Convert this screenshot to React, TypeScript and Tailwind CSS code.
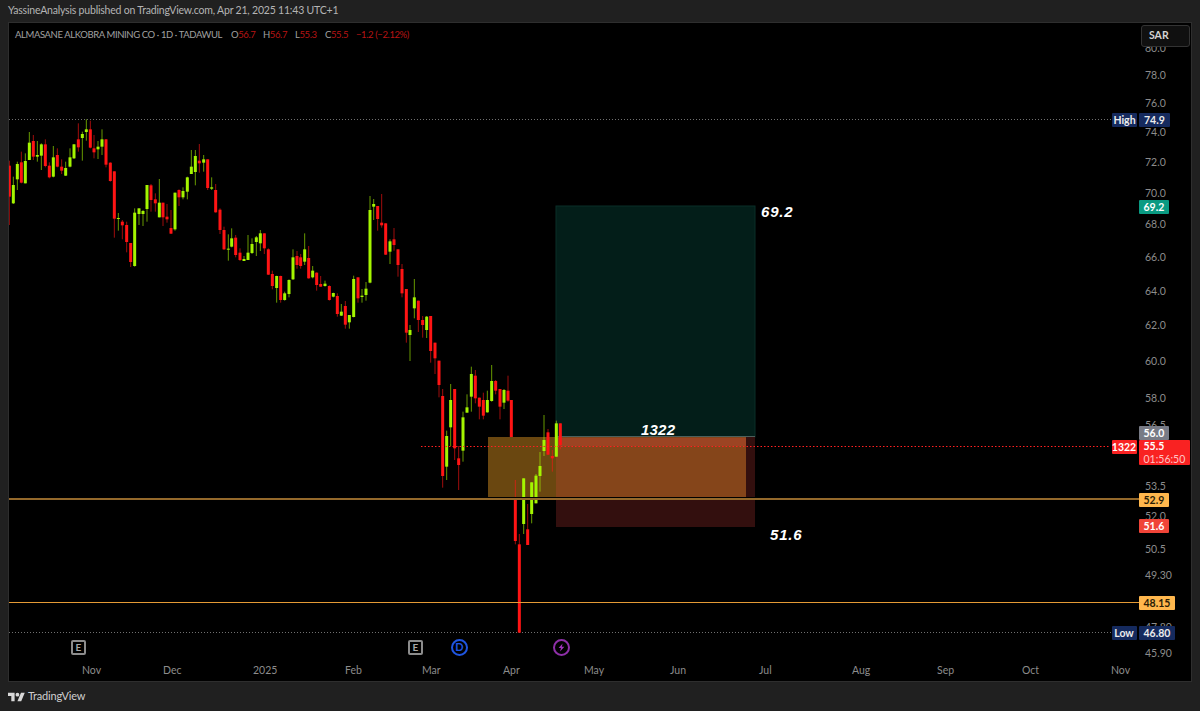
import React from "react";

type Candle = [number, number, number, number, number, "g" | "r"];

// read off the chart as x, wick top, wick bottom, body top, body bottom, colour
const groupA: Candle[] = [
  [28, 152, 345, 167, 260, "r"], [40, 200, 282, 225, 280, "g"], [52, 155, 240, 162, 208, "g"], [64, 125, 220, 157, 218, "r"],
  [76, 130, 220, 153, 220, "g"], [88, 66, 150, 98, 150, "g"], [100, 75, 150, 93, 140, "r"], [112, 93, 155, 135, 140, "g"],
  [124, 100, 180, 103, 137, "g"], [136, 88, 172, 103, 168, "r"], [148, 157, 205, 167, 202, "r"], [160, 108, 202, 142, 200, "g"],
  [172, 115, 172, 135, 170, "r"], [185, 148, 192, 170, 182, "r"], [197, 155, 198, 174, 197, "g"], [210, 115, 172, 142, 170, "g"],
  [222, 102, 147, 103, 145, "g"], [235, 40, 125, 88, 112, "r"], [247, 65, 152, 72, 84, "g"], [259, 28, 92, 58, 66, "g"],
  [271, 32, 115, 58, 113, "r"], [282, 75, 145, 115, 127, "r"], [294, 93, 147, 110, 118, "g"], [306, 58, 135, 88, 110, "g"],
  [318, 87, 172, 88, 164, "r"], [331, 157, 215, 158, 213, "r"], [343, 184, 383, 184, 326, "r"], [355, 309, 362, 324, 327, "g"],
  [367, 330, 388, 335, 346, "r"], [380, 335, 427, 345, 396, "r"], [392, 399, 471, 399, 456, "r"], [404, 295, 470, 308, 468, "g"],
  [417, 295, 345, 295, 312, "g"], [429, 300, 348, 303, 312, "g"], [441, 225, 335, 225, 297, "g"], [453, 222, 305, 226, 270, "r"],
  [466, 250, 305, 268, 280, "r"], [478, 207, 322, 278, 322, "g"], [489, 278, 348, 278, 322, "r"], [501, 282, 338, 320, 328, "r"],
  [513, 300, 372, 354, 371, "r"], [525, 248, 362, 248, 358, "g"], [537, 238, 288, 240, 262, "r"], [549, 232, 268, 243, 262, "g"],
  [562, 200, 268, 202, 245, "g"], [574, 120, 192, 170, 192, "g"], [586, 120, 226, 138, 186, "g"], [598, 102, 188, 152, 160, "r"],
  [611, 135, 185, 148, 158, "g"], [623, 148, 240, 148, 234, "r"], [635, 202, 240, 232, 236, "g"], [647, 222, 308, 240, 307, "r"],
  [660, 295, 372, 299, 360, "r"], [672, 350, 420, 360, 418, "r"], [685, 373, 452, 416, 419, "g"],
];

const groupB: Candle[] = [
  [5, 145, 202, 175, 200, "g"], [17, 165, 232, 173, 225, "r"], [30, 205, 243, 218, 240, "r"], [42, 228, 243, 237, 243, "g"],
  [54, 165, 240, 218, 240, "g"], [66, 175, 222, 192, 219, "g"], [79, 168, 228, 172, 186, "g"], [91, 150, 213, 160, 190, "g"],
  [103, 160, 222, 160, 205, "r"], [115, 205, 285, 208, 284, "r"], [127, 272, 328, 282, 318, "r"], [140, 287, 368, 288, 324, "g"],
  [152, 287, 368, 288, 360, "r"], [164, 335, 362, 340, 360, "g"], [177, 298, 352, 300, 342, "g"], [189, 208, 300, 232, 298, "g"],
  [201, 213, 266, 228, 255, "r"], [212, 222, 266, 232, 258, "r"], [224, 160, 255, 208, 245, "g"], [236, 198, 296, 234, 295, "r"],
  [248, 258, 295, 272, 292, "g"], [260, 277, 332, 278, 315, "r"], [272, 288, 320, 312, 320, "r"], [285, 302, 320, 311, 318, "g"],
  [298, 316, 362, 318, 360, "r"], [310, 338, 352, 339, 350, "g"], [322, 340, 410, 348, 402, "r"], [334, 372, 408, 395, 407, "g"],
  [346, 363, 446, 378, 434, "r"], [358, 405, 446, 405, 427, "g"], [371, 287, 412, 297, 411, "g"], [384, 292, 368, 292, 355, "r"],
  [396, 327, 368, 347, 351, "g"], [408, 306, 362, 326, 345, "g"], [420, 48, 310, 90, 308, "g"], [431, 57, 120, 72, 80, "g"],
  [443, 78, 152, 78, 117, "r"], [455, 42, 143, 128, 136, "r"], [467, 130, 225, 130, 224, "r"], [480, 178, 252, 184, 215, "g"],
  [492, 144, 212, 178, 195, "r"], [504, 208, 290, 208, 255, "r"], [516, 252, 352, 267, 340, "r"], [529, 327, 488, 327, 458, "r"],
];

const groupC: Candle[] = [
  [58, 27, 145, 82, 115, "g"], [70, 92, 186, 92, 150, "r"], [83, 138, 203, 150, 165, "r"],
  [95, 138, 204, 140, 180, "g"], [107, 138, 278, 138, 243, "r"], [120, 218, 312, 218, 265, "r"], [132, 272, 382, 272, 345, "r"],
];

const groupD: Candle[] = [
  [68, 87, 383, 108, 348, "r"], [80, 212, 360, 228, 320, "g"], [92, 72, 258, 120, 202, "g"], [104, 87, 300, 87, 265, "r"],
  [116, 258, 390, 295, 315, "r"], [129, 155, 305, 172, 272, "g"], [141, 103, 158, 142, 158, "g"], [154, 20, 155, 42, 110, "g"],
  [166, 30, 130, 47, 115, "r"], [178, 113, 178, 113, 140, "r"], [190, 98, 178, 120, 167, "r"], [202, 92, 158, 120, 157, "g"],
  [215, 15, 125, 63, 123, "g"], [227, 60, 103, 63, 92, "r"], [240, 87, 178, 87, 140, "r"], [252, 87, 147, 90, 128, "g"],
  [264, 47, 125, 92, 122, "r"], [274, 120, 231, 120, 231, "r"], [286, 360, 553, 417, 543, "r"], [298, 522, 818, 553, 818, "r"],
  [311, 355, 522, 355, 492, "g"], [323, 432, 555, 508, 555, "r"], [335, 367, 490, 367, 462, "g"], [348, 342, 430, 347, 430, "g"],
  [360, 276, 395, 318, 348, "g"], [372, 165, 288, 240, 273, "g"], [384, 207, 285, 217, 284, "r"], [397, 270, 335, 288, 295, "r"],
  [409, 182, 290, 190, 290, "g"], [421, 190, 268, 190, 255, "r"],
];

const place = (rows: Candle[], x0: number, y0: number): Candle[] =>
  rows.map(([x, wt, wb, bt, bb, c]) => [x0 + x / 3, y0 + wt / 3, y0 + wb / 3, y0 + bt / 3, y0 + bb / 3, c]);

const candles = [
  ...place(groupA, 0, 110),
  ...place(groupB, 230, 180),
  [410, 325, 361, 330, 335, "g"] as Candle,
  ...place(groupC, 395, 270),
  ...place(groupD, 420, 360),
];

const ticks = [
  ["80.0", 48], ["78.0", 75], ["76.0", 103], ["74.0", 132], ["72.0", 162], ["70.0", 193], ["68.0", 224], ["66.0", 257],
  ["64.0", 291], ["62.0", 325], ["60.0", 361], ["58.0", 398], ["56.5", 425], ["53.5", 486], ["52.0", 516], ["50.5", 549],
  ["49.30", 575], ["47.80", 627], ["45.90", 653],
] as const;

const months = ["Nov", "Dec", "2025", "Feb", "Mar", "Apr", "May", "Jun", "Jul", "Aug", "Sep", "Oct", "Nov"];

function PriceTag({ y, x, label, children, className }: { y: number; x: number; label?: string; children: React.ReactNode; className: string }) {
  return (
    <div className="absolute flex items-start gap-[2px] text-[10.5px] font-bold leading-[14px]" style={{ left: x - 9, top: y - 23 }}>
      {label && <span className={`w-[25px] rounded-[1px] text-center ${className}`}>{label}</span>}
      <div className={`rounded-[1px] px-[5px] ${className}`}>{children}</div>
    </div>
  );
}

function Chart() {
  return (
    <svg className="absolute inset-0 h-full w-full" viewBox="9 23 1182 658">
      <rect x="556" y="206" width="199" height="231" fill="#031e19" stroke="#0a2f28" strokeWidth="1" />
      <rect x="556" y="437" width="199" height="90" fill="#330f0e" />
      <rect x="556" y="436" width="199" height="1" fill="#4d5f5c" />
      <rect x="488" y="437" width="68" height="60" fill="#6a4710" />
      <rect x="556" y="437" width="190" height="60" fill="#85451a" />
      <rect x="556" y="438" width="190" height="8" fill="#9c4423" />
      <line x1="9" y1="119.5" x2="1112" y2="119.5" stroke="#707070" strokeDasharray="1 2" />
      <line x1="9" y1="632.5" x2="1112" y2="632.5" stroke="#707070" strokeDasharray="1 2" />
      {candles.map(([x, wt, wb, bt, bb, c], i) => {
        const color = c === "g" ? "#a4f500" : "#ff1414";
        return (
          <g key={i} fill={color}>
            <rect x={x - 0.5} y={wt} width="1" height={wb - wt} opacity="0.62" />
            <rect x={x - 1.5} y={bt} width="3" height={Math.max(bb - bt, 1)} />
          </g>
        );
      })}
      <line x1="421" y1="446.5" x2="1110" y2="446.5" stroke="#ff2020" strokeDasharray="1.5 2" />
      <rect x="488" y="497" width="267" height="1" fill="#000000" />
      <rect x="9" y="498" width="1130" height="2" fill="#94692b" />
      <rect x="9" y="602" width="1130" height="1" fill="#e59a35" />
    </svg>
  );
}

function EarningsIcon() {
  return (
    <div className="flex h-[15px] w-[15px] items-center justify-center rounded-[2px] border-2 border-[#8c8c8c] text-[10px] font-bold text-[#a8a8a8]">
      E
    </div>
  );
}

function EventRow() {
  return (
    <div className="relative grid grid-cols-[337px_43px_102px_17px] items-center pl-[62px]">
      <EarningsIcon />
      <EarningsIcon />
      <div className="flex h-[17px] w-[17px] items-center justify-center rounded-full border-2 border-[#1f55e0] text-[11px] font-bold text-[#1f55e0]">
        D
      </div>
      <div className="flex h-[17px] w-[17px] items-center justify-center rounded-full border-2 border-[#8e2fa8]">
        <svg viewBox="0 0 10 10" className="h-[9px] w-[9px]" fill="#a033bc">
          <path d="M6.2 0.5 1.8 5.6h2.6L3.4 9.5 8.2 4.2H5.4z" />
        </svg>
      </div>
    </div>
  );
}

export default function App() {
  return (
    <div className="flex h-[711px] w-[1200px] flex-col overflow-hidden bg-[#202020] font-['Lato',sans-serif]">
      <header className="flex h-[22px] shrink-0 items-center whitespace-nowrap pl-2 text-[10.5px] tracking-[-0.2px] text-[#b4b4b4]">
        YassineAnalysis published on TradingView.com, Apr 21, 2025 11:43 UTC+1
      </header>
      <main className="relative flex h-[660px] shrink-0 flex-col mx-2 border border-[#2e2e2e] bg-black">
        <Chart />
        <div className="relative flex whitespace-nowrap pl-[6px] pt-[5px] text-[9.5px] leading-[14px] tracking-[-0.4px] text-[#a0a0a0]">
          <span className="w-[216px]">ALMASANE ALKOBRA MINING CO · 1D · TADAWUL</span>
          <span className="w-[32px]">O<span className="text-[#b81414]">56.7</span></span>
          <span className="w-[32px]">H<span className="text-[#b81414]">56.7</span></span>
          <span className="w-[30px]">L<span className="text-[#b81414]">55.3</span></span>
          <span className="w-[31px]">C<span className="text-[#b81414]">55.5</span></span>
          <span className="text-[#b81414]">−1.2 (−2.12%)</span>
        </div>

        {ticks.map(([label, y]) => (
          <span
            key={label}
            className="absolute left-[1136px] text-[10.5px] leading-[14px] text-[#8c8c8c]"
            style={{ top: y - 7 - 23 }}
          >
            {label}
          </span>
        ))}
        <div className="absolute left-[1132px] top-[2px] flex h-[22px] w-[49px] items-center rounded-[3px] border border-[#333333] bg-[#101010] pl-[7px] text-[10.5px] font-bold text-[#d4d4d4]">
          SAR
        </div>

        <PriceTag x={1112} y={112.5} label="High" className="bg-[#152a5e] text-[#ececec]">74.9</PriceTag>
        <PriceTag x={1138.5} y={199.5} className="bg-[#0a9a82] text-white">69.2</PriceTag>
        <PriceTag x={1138.5} y={425.5} className="bg-[#787b86] text-white">56.0</PriceTag>
        <PriceTag x={1111.5} y={439.5} label="1322" className="bg-[#f92222] text-white">
          <div className="leading-[13px]">55.5</div>
          <div className="leading-[12px] font-normal text-[#ffc4c4]">01:56:50</div>
        </PriceTag>
        <PriceTag x={1138.5} y={492.5} className="bg-[#ffb74d] text-[#2a1d05]">52.9</PriceTag>
        <PriceTag x={1138.5} y={519} className="bg-[#f04438] text-white">51.6</PriceTag>
        <PriceTag x={1138.5} y={595.5} className="bg-[#ffb74d] text-[#2a1d05]">48.15</PriceTag>
        <PriceTag x={1111.5} y={625.5} label="Low" className="bg-[#152a5e] text-[#ececec]">46.80</PriceTag>

        <span className="absolute left-[752px] top-[178px] font-['Liberation_Sans',sans-serif] text-[15px] font-bold italic tracking-[0.8px] text-white">69.2</span>
        <span className="absolute left-[632px] top-[396px] font-['Liberation_Sans',sans-serif] text-[15px] font-bold italic tracking-[0.2px] text-white">1322</span>
        <span className="absolute left-[761px] top-[501px] font-['Liberation_Sans',sans-serif] text-[15px] font-bold italic tracking-[0.8px] text-white">51.6</span>

        <div className="mt-auto flex flex-col gap-[7px] pb-[4px]">
          <EventRow />
          <div className="relative grid grid-cols-[81px_90px_92px_77px_81px_81px_86px_89px_93px_85px_85px_89px_40px] whitespace-nowrap pl-[73px] text-[10.5px] leading-[14px] text-[#8c8c8c]">
            {months.map((label, i) => (
              <span key={i}>{label}</span>
            ))}
          </div>
        </div>
      </main>
      <footer className="flex flex-1 items-center gap-[3px] pl-2 text-[11px] tracking-[-0.2px] text-[#cfcfcf]">
        <svg viewBox="0 3 36 20" className="h-[10px] w-[17px]" fill="#d8d8d8">
          <path d="M14 22H7V11H0V4h14v18zM28 22h-8l7.5-18h8L28 22z" />
          <circle cx="20" cy="8" r="4" />
        </svg>
        <span>TradingView</span>
      </footer>
    </div>
  );
}
